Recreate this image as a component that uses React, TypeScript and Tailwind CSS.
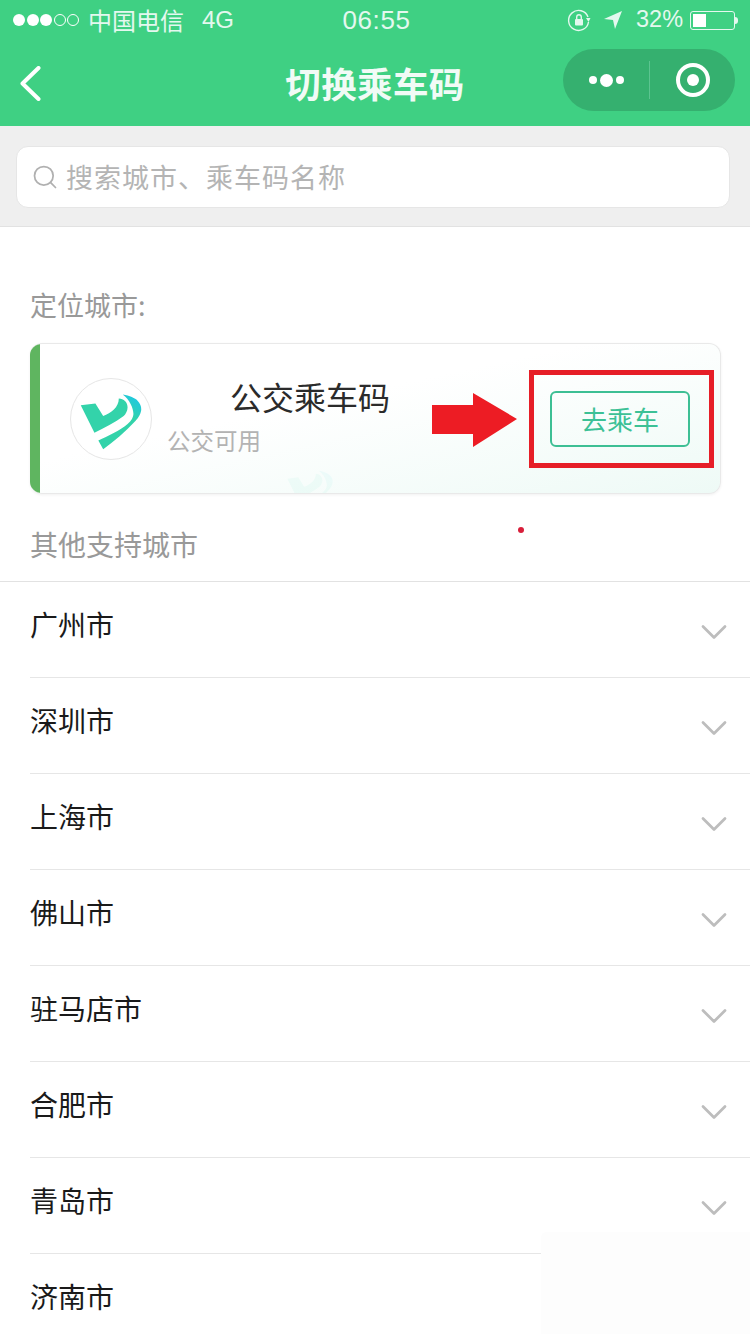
import React from 'react';
import { ChevronDown, Search } from 'lucide-react';

const cities = ['广州市', '深圳市', '上海市', '佛山市', '驻马店市', '合肥市', '青岛市', '济南市'];

const LogoMark = ({ id }: { id: string }) => (
    <>
        <defs>
            <linearGradient id={id} x1="45" y1="55" x2="70" y2="22" gradientUnits="userSpaceOnUse">
                <stop offset="0.55" stopColor="#33d3aa" />
                <stop offset="1" stopColor="#1fc8e0" />
            </linearGradient>
        </defs>
        <path d="M10 27 L25 25 L33 38 C41 35 49 29 49 20 C54 20 58 24 58 29 C58 33 56 36 54 38 C45 45 34 50 24 55 Z" fill="#33d3aa" />
        <path d="M53 16 C60 17 66 20 68 22 C71 25 72 28 72 31 C72 35 69 40 66 43 C56 54 44 64 33 72 L28 63 C38 58 50 53 58 46 C62 43 64 39 64 36 C64 30 60 21 53 16 Z" fill={`url(#${id})`} />
    </>
);

const StatusBar = () => (
    <div className="h-10 flex items-center pl-[13px] pr-[11px] text-[24px] leading-none text-[#e4f8ef]">
        <div className="flex items-center gap-[1.5px]">
            <span className="w-3 h-3 rounded-full bg-white" />
            <span className="w-3 h-3 rounded-full bg-white" />
            <span className="w-3 h-3 rounded-full bg-white" />
            <span className="w-3 h-3 rounded-full border border-white" />
            <span className="w-3 h-3 rounded-full border border-white" />
        </div>
        <span className="ml-[9px] w-[114px]">中国电信</span>
        <span className="w-[140px]" style={{ fontFamily: '"Liberation Sans", sans-serif' }}>4G</span>
        <span className="w-[69px] text-center text-[26px] tracking-[0.6px]" style={{ fontFamily: '"Liberation Sans", sans-serif' }}>06:55</span>
        <svg className="ml-[156px] w-6 h-6" viewBox="0 0 24 24" fill="none" stroke="#e4f8ef" strokeWidth="1.4">
            <path d="M21 9 A10 10 0 1 0 21.5 14" />
            <path d="M19 10 L23.5 10 L21.5 14 Z" fill="#e4f8ef" stroke="none" />
            <rect x="8" y="11" width="8" height="6.5" rx="1" fill="#e4f8ef" stroke="none" />
            <path d="M9.7 11 V9 A2.3 2.3 0 0 1 14.3 9 V11" />
        </svg>
        <svg className="ml-[12px] w-5 h-5" viewBox="0 0 20 20" fill="#e4f8ef">
            <path d="M19 1 L1 9 L10 10 L12 19 Z" />
        </svg>
        <span className="ml-[13px] w-[46px] text-[23.5px]" style={{ fontFamily: '"Liberation Sans", sans-serif' }}>32%</span>
        <div className="ml-[8px] flex items-center">
            <div className="w-[45px] h-[19px] rounded-[3px] border border-[#e4f8ef] p-[2px]">
                <div className="w-[13px] h-full bg-white" />
            </div>
            <div className="w-[3px] h-[7px] bg-[#e4f8ef] rounded-r-sm" />
        </div>
    </div>
);

const NavBar = () => (
    <div className="h-[86px] relative flex items-start justify-between pl-[20px] pr-[15px] pt-[9px]">
        <svg className="w-[21px] h-[35px] mt-[17px]" viewBox="0 0 21 35" fill="none" stroke="#fff" strokeWidth="4" strokeLinecap="round" strokeLinejoin="round">
            <path d="M18.5 2 L2.5 17.5 L18.5 33" />
        </svg>
        <h1 className="absolute left-0 right-0 top-[22px] text-center text-[35.5px] font-semibold text-[#f1fbf6] tracking-[0.4px] leading-[42px]">切换乘车码</h1>
        <div className="w-[172px] h-[62px] rounded-full bg-[#35b06f] flex items-center">
            <div className="w-[86px] flex items-center justify-center gap-[3px]">
                <span className="w-2 h-2 rounded-full bg-white" />
                <span className="w-[13px] h-[13px] rounded-full bg-white" />
                <span className="w-2 h-2 rounded-full bg-white" />
            </div>
            <div className="w-px h-[38px] bg-[#5cc490]" />
            <div className="flex-1 flex items-center justify-center">
                <div className="w-[34px] h-[34px] rounded-full border-[4px] border-white flex items-center justify-center">
                    <span className="w-[12px] h-[12px] rounded-full bg-white" />
                </div>
            </div>
        </div>
    </div>
);

const App = () => {
    return (
        <div
            className="relative w-[750px] h-[1334px] overflow-hidden bg-white"
            style={{ fontFamily: '"Noto Sans CJK SC", "Liberation Sans", sans-serif' }}
        >
            <header className="bg-[#3fd083]">
                <StatusBar />
                <NavBar />
            </header>

            <div className="h-[101px] bg-[#efefef] border-b border-[#e2e2e2] px-4 pt-5">
                <div className="h-[62px] w-[714px] rounded-xl bg-white border border-[#e6e6e6] flex items-center pl-[14px] text-[27px] text-[#b4b4b4] tracking-[1px]">
                    <Search className="w-[28px] h-[28px] text-[#b0b0b0] mr-[7px]" strokeWidth={1.5} />
                    <span>搜索城市、乘车码名称</span>
                </div>
            </div>

            <p className="mt-[58px] ml-[30px] text-[27px] leading-10 text-[#999]">定位城市:</p>

            <div className="mt-[18px] ml-[30px] w-[691px] h-[151px] rounded-xl border border-l-0 border-[#e9e9e9] shadow-[0_1px_3px_rgba(0,0,0,0.06)] bg-linear-to-br from-white from-40% to-[#eefaf6] overflow-hidden flex items-center relative">
                <svg className="absolute left-[250px] top-[115px] w-[60px] h-[60px] opacity-5" viewBox="0 0 82 82">
                    <LogoMark id="mark-faint" />
                </svg>
                <div className="w-[10px] h-full bg-[#5fb560] shrink-0" />
                <div className="ml-[30px] w-[82px] h-[82px] rounded-full border border-[#e6e6e6] bg-white shrink-0">
                    <svg className="w-full h-full" viewBox="0 0 82 82">
                        <LogoMark id="mark-main" />
                    </svg>
                </div>
                <div className="ml-[15px] flex-1 pb-[5px]">
                    <p className="pl-[63px] text-[32px] leading-10 text-[#2b2b2b]">公交乘车码</p>
                    <p className="mt-[7px] text-[23.5px] leading-[34px] text-[#b3b3b3]">公交可用</p>
                </div>
                <button className="mr-[30px] w-[140px] h-[56px] rounded-md border-2 border-[#3dbf94] text-[26px] text-[#3cc196] shrink-0">
                    去乘车
                </button>
            </div>

            <p className="mt-[30px] ml-[30px] text-[28px] leading-10 text-[#999]">其他支持城市</p>

            <ul className="mt-[17px] border-t border-[#e2e2e2]">
                {cities.map((city, i) => (
                    <li key={city} className="pl-[30px] h-[96px] first:-mt-px">
                        <div
                            className={`h-[96px] flex items-start justify-between pr-[14px] ${
                                i > 0 ? 'border-t border-[#e6e6e6] pt-[22px]' : 'pt-[23px]'
                            }`}
                        >
                            <span className="text-[28px] leading-10 text-[#1a1a1a]">{city}</span>
                            <ChevronDown className="w-[44px] h-[44px] mt-[6px] text-[#bdbdbd]" strokeWidth={1.5} />
                        </div>
                    </li>
                ))}
            </ul>

            {/* screenshot annotations and the patch at the bottom */}
            <div className="absolute left-[541px] top-[1232px] w-[209px] h-[102px] bg-[#fdfdfd] rounded-tl-md" />
            <div className="absolute left-[529px] top-[370px] w-[185px] h-[98px] border-[5px] border-[#e61e27]" />
            <svg className="absolute left-[432px] top-[393px] w-[85px] h-[54px]" viewBox="0 0 85 54" fill="#ed1c24">
                <path d="M0 12 H41 V0 L85 26 L41 54 V41 H0 Z" />
            </svg>
            <div className="absolute left-[518px] top-[527px] w-[6px] h-[6px] rounded-full bg-[#d81e3a]" />
        </div>
    );
};

export default App;
